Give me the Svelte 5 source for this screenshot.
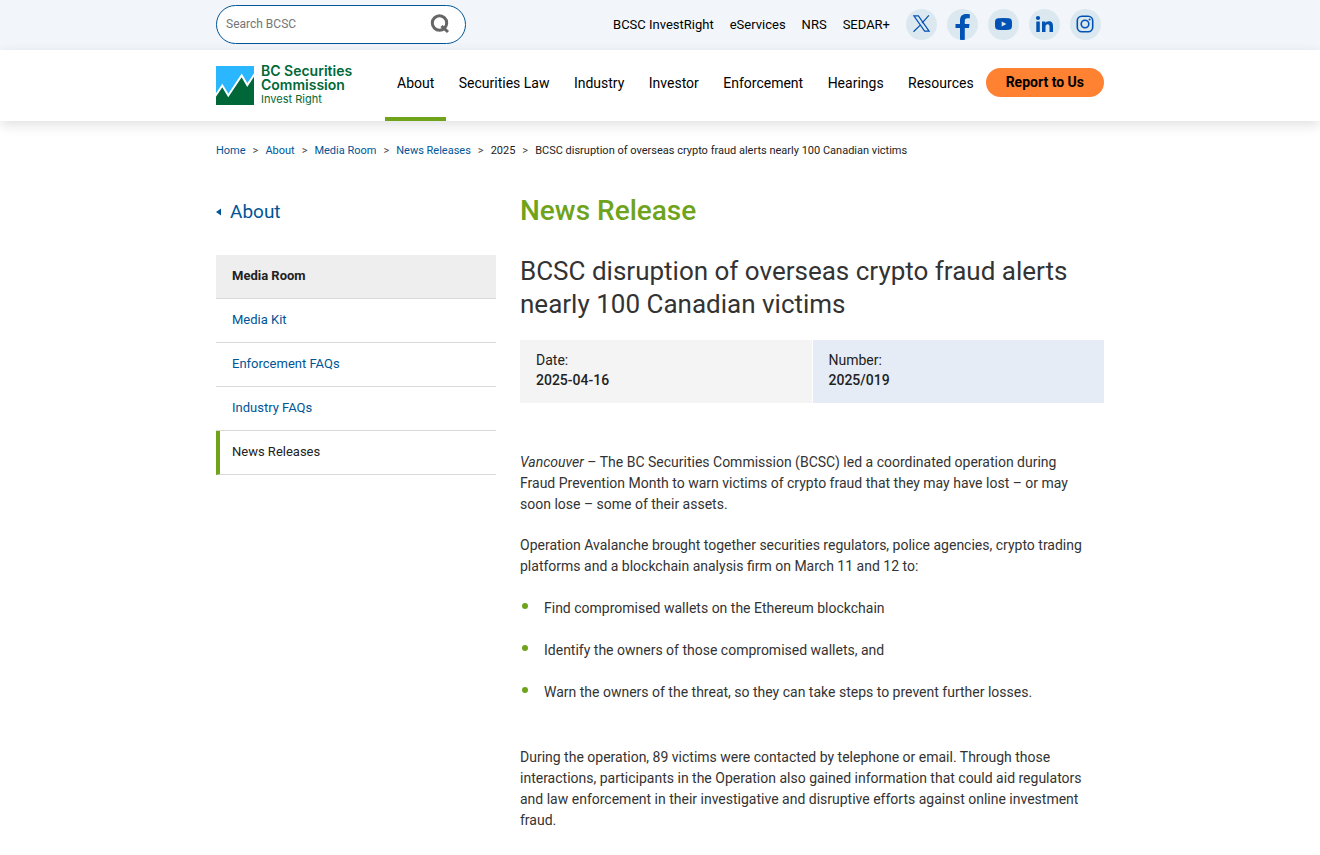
<script>
  const topLinks = ['BCSC InvestRight', 'eServices', 'NRS', 'SEDAR+'];

  const navItems = [
    'About',
    'Securities Law',
    'Industry',
    'Investor',
    'Enforcement',
    'Hearings',
    'Resources',
  ];

  const crumbs = ['Home', 'About', 'Media Room', 'News Releases'];

  const sideItems = ['Media Kit', 'Enforcement FAQs', 'Industry FAQs', 'News Releases'];

  let active = $state('About');
  let search = $state('');
</script>

<header>
  <div class="topbar">
    <div class="container topbar-inner">
      <form class="search" role="search" onsubmit={(e) => e.preventDefault()}>
        <input type="text" placeholder="Search BCSC" aria-label="Search BCSC" bind:value={search} />
        <button type="submit" aria-label="Search">
          <svg width="20" height="20" viewBox="0 0 20 20" fill="none" stroke="#666" aria-hidden="true">
            <circle cx="9.5" cy="9" r="7.2" stroke-width="3" />
            <path d="M11.5 12l2 1.800 4.500 4.200" stroke-width="3" />
          </svg>
        </button>
      </form>

      <nav class="top-links" aria-label="Related sites">
        {#each topLinks as link}
          <a href="#top">{link}</a>
        {/each}
      </nav>

      <div class="social">
        <a href="#x" aria-label="X">
          <svg viewBox="0 0 31 31" aria-hidden="true">
            <path
              fill="none"
              stroke="#0052b4"
              stroke-width="1.2"
              d="M7.9 6.8h4.5l10.7 15.4h-4.5zM22.9 6.3l-6.900 7.8M14 16.4l-6.500 6.3"
            />
          </svg>
        </a>
        <a href="#facebook" aria-label="Facebook">
          <svg viewBox="0 0 31 31" aria-hidden="true">
            <path
              fill="#0052b4"
              d="M13 31V19H8.500v-4H13v-3.600c0-4.200 2.300-6.400 6.200-6.400 1.400 0 2.700.1 3.600.3v3.900h-2.300c-2.200 0-2.700 1-2.700 2.700V15h4.700l-.5 4h-4.200v12z"
            />
          </svg>
        </a>
        <a href="#youtube" aria-label="YouTube">
          <svg viewBox="0 0 31 31" aria-hidden="true">
            <path
              fill="#0052b4"
              fill-rule="evenodd"
              d="M10 9.3q5.500-.6 11 0Q23.700 9.500 23.900 12q.3 3 0 6-.2 2.600-2.900 2.800-5.500.5-11 0Q7.300 20.600 7.100 18q-.3-3 0-6 .2-2.500 2.900-2.700zM13.700 12.400v5.200l4.800-2.600z"
            />
          </svg>
        </a>
        <a href="#linkedin" aria-label="LinkedIn">
          <svg viewBox="0 0 31 31" fill="#0052b4" aria-hidden="true">
            <circle cx="9" cy="9" r="2.100" />
            <path
              d="M7.300 12.500h3.500V23H7.300zM13 12.500h3.300V14c.6-1 1.800-1.800 3.500-1.800 3.200 0 4.200 2 4.200 5V23h-3.500v-5.300c0-1.500-.4-2.500-1.800-2.500s-2.200 1-2.200 2.500V23H13z"
            />
          </svg>
        </a>
        <a href="#instagram" aria-label="Instagram">
          <svg viewBox="0 0 31 31" fill="none" stroke="#0052b4" stroke-width="1.600" aria-hidden="true">
            <rect x="7.300" y="7.300" width="15.400" height="15.400" rx="4.500" />
            <circle cx="15" cy="15" r="3.800" />
            <circle cx="19.600" cy="10.500" r="1" fill="#0052b4" stroke="none" />
          </svg>
        </a>
      </div>
    </div>
  </div>

  <div class="mainbar">
    <div class="container mainbar-inner">
      <a class="logo" href="#home" aria-label="BC Securities Commission, Invest Right">
        <svg width="38" height="39" viewBox="0 0 38 39" aria-hidden="true">
          <path fill="#2ab7ff" d="M0 0h38v39H0z" />
          <path fill="#006838" d="M0 29l6.300-10 6 11.500L25.700 9.500l5.600 10.500L38 9v30H0z" />
          <path
            fill="none"
            stroke="#fff"
            stroke-width="2"
            d="M-1 30.500L6.300 19.500l6 10L25.700 9.500l5.600 9.500L39 7.500"
          />
        </svg>
        <span class="logo-text">
          <strong>BC Securities<br />Commission</strong>
          <span>Invest Right</span>
        </span>
      </a>

      <nav class="main-nav" aria-label="Main">
        {#each navItems as item}
          <a href="#nav" class:active={active === item} onclick={() => (active = item)}>{item}</a>
        {/each}
      </nav>

      <a class="report" href="#report">Report to Us</a>
    </div>
  </div>
</header>

<div class="container">
  <nav class="breadcrumb" aria-label="Breadcrumb">
    {#each crumbs as crumb}
      <a href="#crumb">{crumb}</a>
      <span class="sep">&gt;</span>
    {/each}
    <span>2025</span>
    <span class="sep">&gt;</span>
    <span>BCSC disruption of overseas crypto fraud alerts nearly 100 Canadian victims</span>
  </nav>

  <div class="columns">
    <aside>
      <a class="back" href="#about">
        <svg width="5" height="8" viewBox="0 0 5 8" aria-hidden="true">
          <path fill="#005596" d="M5 .5v7L0 4z" />
        </svg>
        About
      </a>
      <ul class="side-nav">
        <li class="heading"><a href="#media-room">Media Room</a></li>
        {#each sideItems as item}
          <li class:current={item === 'News Releases'}><a href="#side">{item}</a></li>
        {/each}
      </ul>
    </aside>

    <main>
      <h1>News Release</h1>
      <h2>BCSC disruption of overseas crypto fraud alerts nearly 100 Canadian victims</h2>

      <dl class="meta">
        <div class="date">
          <dt>Date:</dt>
          <dd>2025-04-16</dd>
        </div>
        <div class="number">
          <dt>Number:</dt>
          <dd>2025/019</dd>
        </div>
      </dl>

      <article>
        <p>
          <em>Vancouver</em> – The BC Securities Commission (BCSC) led a coordinated operation during
          Fraud Prevention Month to warn victims of crypto fraud that they may have lost – or may
          soon lose – some of their assets.
        </p>
        <p>
          Operation Avalanche brought together securities regulators, police agencies, crypto trading
          platforms and a blockchain analysis firm on March 11 and 12 to:
        </p>
        <ul>
          <li>Find compromised wallets on the Ethereum blockchain</li>
          <li>Identify the owners of those compromised wallets, and</li>
          <li>Warn the owners of the threat, so they can take steps to prevent further losses.</li>
        </ul>
        <p>
          During the operation, 89 victims were contacted by telephone or email. Through those
          interactions, participants in the Operation also gained information that could aid regulators
          and law enforcement in their investigative and disruptive efforts against online investment
          fraud.
        </p>
      </article>
    </main>
  </div>
</div>

<style>
  :global(body) {
    background: #fff;
    color: #333;
    font-family: Roboto, "Liberation Sans", sans-serif;
    font-size: 14px;
    line-height: 21px;
  }

  a {
    color: #005596;
    text-decoration: none;
  }

  ul,
  dl,
  dd {
    margin: 0;
    padding: 0;
    list-style: none;
  }

  .container {
    box-sizing: border-box;
    max-width: 936px;
    margin: 0 auto;
    padding: 0 24px;
  }

  /* Top bar */
  .topbar {
    background: #f2f6fa;
  }

  .topbar-inner {
    display: flex;
    align-items: center;
    height: 50px;
    padding-bottom: 2px;
  }

  .search {
    display: flex;
    align-items: center;
    box-sizing: border-box;
    width: 250px;
    height: 39px;
    padding: 0 15px 0 9px;
    border: 1px solid #005596;
    border-radius: 20px;
    background: #fff;
  }

  .search input {
    flex: 1;
    min-width: 0;
    padding: 0;
    border: 0;
    outline: 0;
    background: none;
    color: #333;
    font: inherit;
    font-size: 12px;
  }

  .search input::placeholder {
    color: #757575;
  }

  .search button {
    display: flex;
    padding: 0;
    border: 0;
    background: none;
    cursor: pointer;
  }

  .top-links {
    display: flex;
    gap: 16px;
    margin-left: auto;
    margin-right: 16px;
  }

  .top-links a {
    color: #000;
    font-size: 13px;
  }

  .social {
    display: flex;
    gap: 10px;
    margin-right: 3px;
  }

  .social a {
    width: 31px;
    height: 31px;
    overflow: hidden;
    border-radius: 50%;
    background: #dce8ef;
  }

  .social svg {
    display: block;
  }

  /* Main bar */
  .mainbar {
    background: #fff;
    box-shadow: 0 4px 12px rgba(0, 0, 0, 0.12);
  }

  .mainbar-inner {
    display: flex;
    align-items: stretch;
    height: 71px;
  }

  .logo {
    display: flex;
    align-items: center;
    gap: 7px;
    width: 169px;
    color: #006838;
  }

  .logo-text {
    font-family: Inter, "Liberation Sans", sans-serif;
    font-size: 11px;
    line-height: 15px;
  }

  .logo-text strong {
    display: block;
    font-size: 14px;
    font-weight: 600;
    line-height: 14px;
  }

  .main-nav {
    display: flex;
    flex: 1;
    justify-content: space-between;
  }

  .main-nav a {
    display: flex;
    align-items: center;
    padding: 0 12px;
    border-bottom: 4px solid transparent;
    color: #000;
    white-space: nowrap;
  }

  .main-nav a.active {
    border-bottom-color: #6fa31c;
  }

  .report {
    align-self: center;
    padding: 4px 20px;
    margin-bottom: 6px;
    border-radius: 15px;
    background: #ff8132;
    color: #000;
    font-weight: 700;
    white-space: nowrap;
  }

  /* Breadcrumb */
  .breadcrumb {
    display: flex;
    flex-wrap: wrap;
    gap: 7px;
    padding-top: 19px;
    color: #222;
    font-size: 11px;
  }

  .sep {
    color: #444;
  }

  .columns {
    display: grid;
    grid-template-columns: 280px 1fr;
    gap: 24px;
    padding-top: 34px;
  }

  /* Side navigation */
  .back {
    display: flex;
    align-items: center;
    gap: 9px;
    padding-top: 5px;
    font-size: 19px;
    line-height: 24px;
  }

  .side-nav {
    margin-top: 31px;
    font-size: 13px;
  }

  .side-nav li {
    border-bottom: 1px solid #d9d9d9;
  }

  .side-nav a {
    display: block;
    padding: 10px 16px 12px;
  }

  .side-nav .heading {
    background: #eee;
  }

  .side-nav .heading a {
    color: #222;
    font-weight: 700;
  }

  .side-nav .current {
    border-left: 4px solid #6fa31c;
  }

  .side-nav .current a {
    padding-left: 12px;
    color: #222;
  }

  /* Release */
  h1,
  h2 {
    margin: 0;
  }

  h1 {
    color: #6fa31c;
    font-size: 28px;
    font-weight: 500;
    line-height: 32px;
  }

  h2 {
    margin-top: 28px;
    font-size: 26px;
    font-weight: 400;
    line-height: 33px;
  }

  .meta {
    display: grid;
    grid-template-columns: 1fr 1fr;
    gap: 1px;
    margin-top: 19px;
    color: #222;
    line-height: 20px;
  }

  .meta div {
    padding: 10px 16px 13px;
  }

  .meta .date {
    background: #f4f4f4;
  }

  .meta .number {
    background: #e5ecf5;
  }

  .meta dd {
    font-weight: 500;
  }

  article {
    padding: 49px 12px 24px 0;
  }

  article p {
    margin: 0 0 20px;
  }

  article ul {
    margin: 21px 0 44px;
  }

  article li {
    display: flex;
    gap: 16px;
    margin-bottom: 21px;
    padding-left: 2px;
  }

  article li::before {
    content: "";
    flex: none;
    width: 6px;
    height: 6px;
    margin-top: 5px;
    border-radius: 50%;
    background: #6fa31c;
  }
</style>
